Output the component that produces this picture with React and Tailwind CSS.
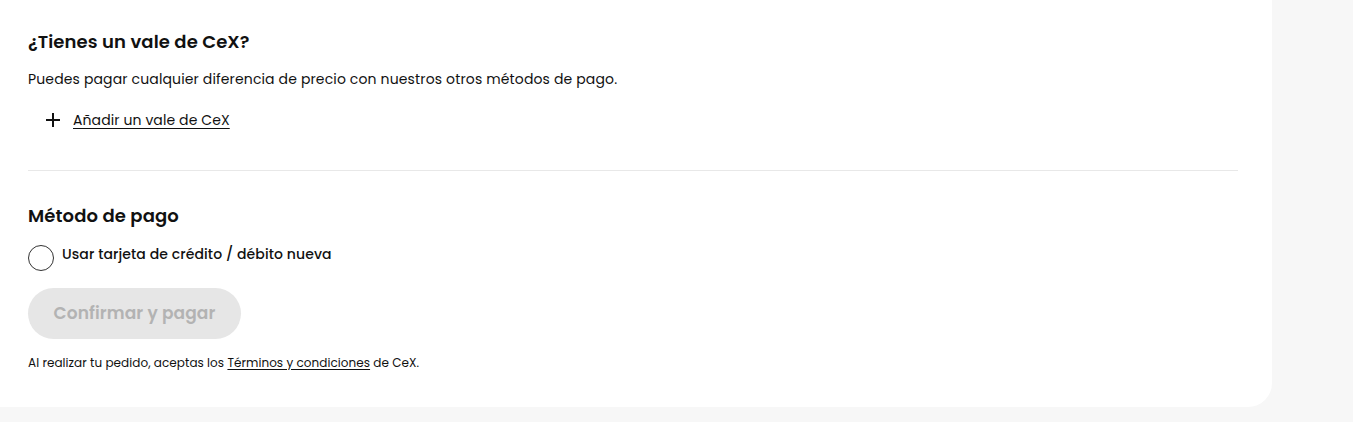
export default function App() {
  return (
    <div className="min-h-[422px] bg-[#f7f7f7] font-['Poppins','Inter',sans-serif] text-[#111]">
      <div className="w-[1272px] bg-white rounded-br-[24px] pl-[28px] pr-[34px] pt-[29px] pb-[35px]">
        <h2 className="text-[18px] font-semibold leading-[26px] tracking-[0.1px]">¿Tienes un vale de CeX?</h2>
        <p className="mt-[13px] text-[14px] leading-[22px] tracking-[0.14px]">
          Puedes pagar cualquier diferencia de precio con nuestros otros métodos de pago.
        </p>
        <button className="mt-[20px] ml-[18px] flex items-center gap-[13px] text-[14px] leading-[20px]">
          <svg width="14" height="14" viewBox="0 0 14 14" fill="none" stroke="#111" strokeWidth="2">
            <path d="M7 0v14M0 7h14" />
          </svg>
          <span className="underline underline-offset-[3px] tracking-[0.1px]">Añadir un vale de CeX</span>
        </button>
        <div className="mt-[40px] border-t border-[#e8e8e8]" />
        <h2 className="mt-[32px] text-[18px] font-semibold leading-[26px] tracking-[0.1px]">Método de pago</h2>
        <label className="mt-[15px] flex items-start gap-[8px]">
          <span className="mt-[1px] w-[26px] h-[26px] rounded-full border border-[#333] bg-white shrink-0" />
          <span className="text-[14px] font-medium leading-[20px] tracking-[0.1px]">Usar tarjeta de crédito / débito nueva</span>
        </label>
        <button
          disabled
          className="mt-[17px] h-[51px] w-[213px] rounded-full bg-[#e6e6e6] text-[#b3b3b3] text-[17px] font-semibold tracking-[0.1px]"
        >
          Confirmar y pagar
        </button>
        <p className="mt-[15px] text-[12px] leading-[18px] tracking-[0.05px]">
          Al realizar tu pedido, aceptas los{" "}
          <a className="underline underline-offset-[2px]">Términos y condiciones</a> de CeX.
        </p>
      </div>
    </div>
  );
}
